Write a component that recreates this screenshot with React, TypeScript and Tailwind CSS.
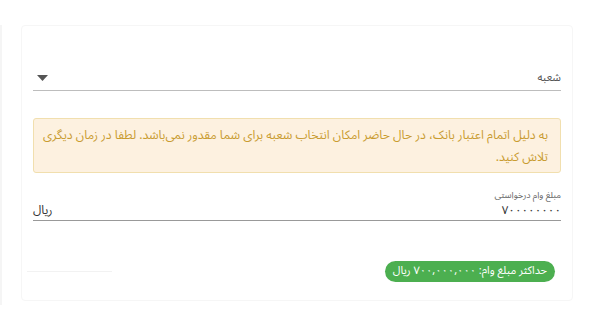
import { useState } from 'react'

const FONT = { fontFamily: '"Noto Sans Arabic", "DejaVu Sans", "Noto Sans", sans-serif' }

function CaretDown() {
  return (
    <svg width="11" height="6" viewBox="0 0 11 6" className="fill-[#555]">
      <path d="M0 0h11L5.5 6z" />
    </svg>
  )
}

export default function App() {
  const [amount] = useState('۷۰۰۰۰۰۰۰۰')

  return (
    <div dir="rtl" style={FONT} className="w-[590px] h-[330px] bg-white flex flex-row-reverse pt-[25px]">
      <div className="w-[2px] h-[280px] bg-[#f5f5f5]" />
      <div className="w-[19px]" />
      <div className="w-[552px] h-[276px] border border-[#f6f6f6] rounded-sm flex flex-col px-[11px]">
        {/* branch select */}
        <div className="mt-[43px] h-[22px] flex items-center justify-between border-b border-[#bdbdbd]">
          <span className="text-[11px] text-[#555] leading-none -mt-1">شعبه</span>
          <span className="ml-[4px] -mt-1">
            <CaretDown />
          </span>
        </div>

        {/* warning */}
        <div className="mt-[27px] rounded-[3px] border border-[#f1dfae] bg-[#fdf1e0] px-[12px] pt-[5px] pb-[4px] text-[12.2px] leading-[22px] text-[#c99c30] whitespace-nowrap">
          <p>به دلیل اتمام اعتبار بانک، در حال حاضر امکان انتخاب شعبه برای شما مقدور نمی‌باشد. لطفا در زمان دیگری</p>
          <p>تلاش کنید.</p>
        </div>

        {/* amount */}
        <div className="mt-[16px] flex flex-col">
          <span className="text-[9px] text-[#666] leading-[13px]">مبلغ وام درخواستی</span>
          <div className="h-[19px] flex items-center justify-between border-b border-[#999]">
            <span className="text-[11.5px] text-[#333] leading-none tracking-[1.5px]">{amount}</span>
            <span className="text-[12px] text-[#333] leading-none">ریال</span>
          </div>
        </div>

        {/* max amount */}
        <div className="mt-[40px] flex items-center justify-between">
          <span className="mr-[6px] h-[21px] px-[8px] rounded-full bg-[#4caf50] text-white text-[11px] flex items-center">
            حداکثر مبلغ وام: ۷۰۰,۰۰۰,۰۰۰ ریال
          </span>
          <span className="ml-[-6px] w-[85px] h-px bg-[#f2f2f2]" />
        </div>
      </div>
    </div>
  )
}
